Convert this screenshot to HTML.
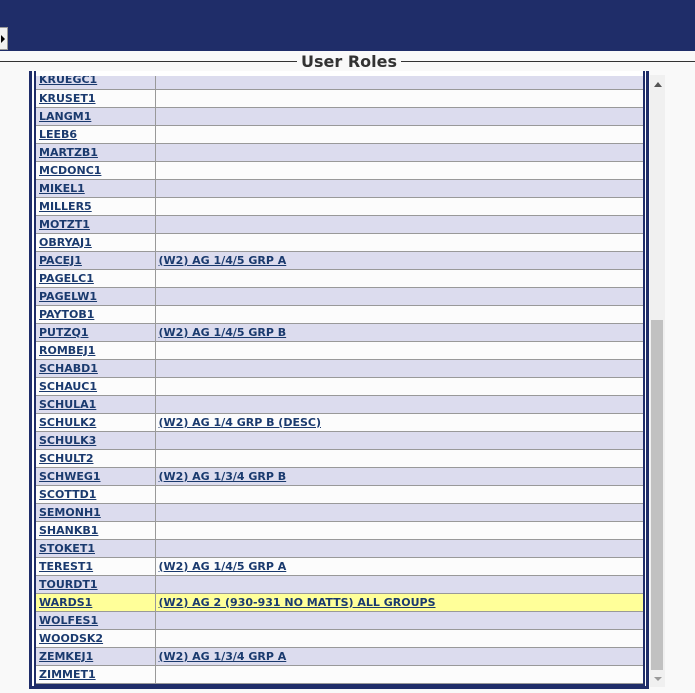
<!DOCTYPE html>
<html><head><style>
*{margin:0;padding:0;box-sizing:border-box}
body{width:695px;height:693px;background:#f9f9f9;position:relative;overflow:hidden;font-family:"DejaVu Sans","Liberation Sans",sans-serif}
#hdr{position:absolute;left:0;top:0;width:695px;height:51px;background:#1f2d69}
#btn{position:absolute;left:0;top:27px;width:8px;height:23px;background:#f0f0f0;border:1px solid #999;border-left:none}
#btn:after{content:"";position:absolute;left:1px;top:7px;border-left:4px solid #000;border-top:4px solid transparent;border-bottom:4px solid transparent}
#line{position:absolute;left:0;top:61px;width:695px;height:1px;background:#333}
#title{position:absolute;left:297px;top:52px;padding:0 4px;background:#f9f9f9;font-weight:bold;font-size:16px;color:#333;line-height:20px}
#outer{position:absolute;left:29px;top:71px;width:620px;height:618px;border:3px solid #1f2d69;border-top:none;background:#fff}
#inner{position:absolute;left:34px;top:71px;width:611px;height:615px;border:2px solid #1f2d69;border-top:none;background:#fff}
#clip{position:absolute;left:36px;top:76px;width:607px;height:608px;overflow:hidden}
table{position:absolute;left:0;top:-5px;width:607px;border-collapse:collapse}
td{height:18px;border-bottom:1px solid #999;font-size:11px;font-weight:bold;padding:0 0 0 3px;line-height:17px}
td:first-child{width:119px;border-right:1px solid #999}
tr:nth-child(odd) td{background:#dcdcee}
tr:nth-child(even) td{background:#fcfcfc}
tr.y td{background:#ffff99}
a{color:#1a3a6e;text-decoration:underline}
#sb{position:absolute;left:650px;top:75px;width:15px;height:612px;background:#f0f0f0}
#thumb{position:absolute;left:651px;top:320px;width:12px;height:350px;background:#c1c1c1}
#up{position:absolute;left:654px;top:82px;border-bottom:5px solid #555;border-left:4px solid transparent;border-right:4px solid transparent}
#dn{position:absolute;left:654px;top:677px;border-top:4px solid #999;border-left:4px solid transparent;border-right:4px solid transparent}
</style></head><body>
<div id="hdr"></div><div id="btn"></div>
<div id="line"></div><div id="title">User Roles</div>
<div id="outer"></div><div id="inner"></div>
<div id="clip"><table>
<tr><td><a>KRUEGC1</a></td><td></td></tr>
<tr><td><a>KRUSET1</a></td><td></td></tr>
<tr><td><a>LANGM1</a></td><td></td></tr>
<tr><td><a>LEEB6</a></td><td></td></tr>
<tr><td><a>MARTZB1</a></td><td></td></tr>
<tr><td><a>MCDONC1</a></td><td></td></tr>
<tr><td><a>MIKEL1</a></td><td></td></tr>
<tr><td><a>MILLER5</a></td><td></td></tr>
<tr><td><a>MOTZT1</a></td><td></td></tr>
<tr><td><a>OBRYAJ1</a></td><td></td></tr>
<tr><td><a>PACEJ1</a></td><td><a>(W2) AG 1/4/5 GRP A</a></td></tr>
<tr><td><a>PAGELC1</a></td><td></td></tr>
<tr><td><a>PAGELW1</a></td><td></td></tr>
<tr><td><a>PAYTOB1</a></td><td></td></tr>
<tr><td><a>PUTZQ1</a></td><td><a>(W2) AG 1/4/5 GRP B</a></td></tr>
<tr><td><a>ROMBEJ1</a></td><td></td></tr>
<tr><td><a>SCHABD1</a></td><td></td></tr>
<tr><td><a>SCHAUC1</a></td><td></td></tr>
<tr><td><a>SCHULA1</a></td><td></td></tr>
<tr><td><a>SCHULK2</a></td><td><a>(W2) AG 1/4 GRP B (DESC)</a></td></tr>
<tr><td><a>SCHULK3</a></td><td></td></tr>
<tr><td><a>SCHULT2</a></td><td></td></tr>
<tr><td><a>SCHWEG1</a></td><td><a>(W2) AG 1/3/4 GRP B</a></td></tr>
<tr><td><a>SCOTTD1</a></td><td></td></tr>
<tr><td><a>SEMONH1</a></td><td></td></tr>
<tr><td><a>SHANKB1</a></td><td></td></tr>
<tr><td><a>STOKET1</a></td><td></td></tr>
<tr><td><a>TEREST1</a></td><td><a>(W2) AG 1/4/5 GRP A</a></td></tr>
<tr><td><a>TOURDT1</a></td><td></td></tr>
<tr class="y"><td><a>WARDS1</a></td><td><a>(W2) AG 2 (930-931 NO MATTS) ALL GROUPS</a></td></tr>
<tr><td><a>WOLFES1</a></td><td></td></tr>
<tr><td><a>WOODSK2</a></td><td></td></tr>
<tr><td><a>ZEMKEJ1</a></td><td><a>(W2) AG 1/3/4 GRP A</a></td></tr>
<tr><td><a>ZIMMET1</a></td><td></td></tr>
</table></div>
<div id="sb"></div><div id="thumb"></div><div id="up"></div><div id="dn"></div>
</body></html>
